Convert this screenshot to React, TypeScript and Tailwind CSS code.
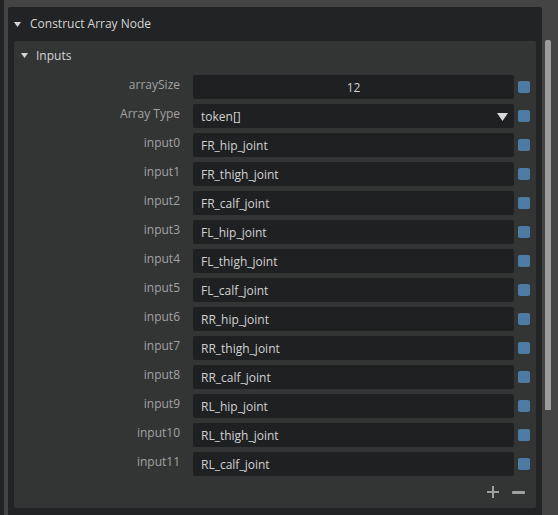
import React from 'react';

const inputs = [
  'FR_hip_joint',
  'FR_thigh_joint',
  'FR_calf_joint',
  'FL_hip_joint',
  'FL_thigh_joint',
  'FL_calf_joint',
  'RR_hip_joint',
  'RR_thigh_joint',
  'RR_calf_joint',
  'RL_hip_joint',
  'RL_thigh_joint',
  'RL_calf_joint',
];

const Caret = ({ className }: { className?: string }) => (
  <svg width="7" height="5" viewBox="0 0 7 5" className={className}>
    <path d="M0 0 H7 L3.5 5 Z" fill="currentColor" />
  </svg>
);

const Row = ({ label, children }: { label: string; children: React.ReactNode }) => (
  <div className="flex items-start h-[24px]">
    <div className="w-[166px] shrink-0 pt-[1px] text-right text-[12px] leading-[18px] text-[#a2a2a2]">{label}</div>
    <div className="ml-[13px] w-[321px] h-[24px] pt-[1px] rounded-[2px] bg-[#1f2022] flex items-center text-[12px] text-[#d2d2d2]">
      {children}
    </div>
    <div className="ml-[4px] h-[24px] flex items-center">
      <div className="w-[12px] h-[12px] rounded-[2px] bg-[#4d7ba3]" />
    </div>
  </div>
);

export default function App() {
  return (
    <div
      className="flex w-[558px] h-[515px] overflow-hidden bg-[#444444]"
      style={{ fontFamily: '"Open Sans", "Noto Sans", sans-serif' }}
    >
      <div className="w-[4px] h-full bg-[#222324]" />
      <div className="ml-[4px] mt-[7px] w-[534px] flex flex-col bg-[#222324] rounded-tl-[2px] rounded-tr-[2px]">
        <div className="h-[34px] flex items-center pl-[6px] text-[#d5d5d5] text-[12px]">
          <Caret className="text-[#d5d5d5]" />
          <span className="ml-[9px]">Construct Array Node</span>
        </div>
        <div className="mx-[6px] h-[467px] bg-[#333434] rounded-[2px] flex flex-col">
          <div className="h-[29px] flex items-center pl-[7px] text-[#d5d5d5] text-[12px]">
            <Caret className="text-[#d5d5d5]" />
            <span className="ml-[8px]">Inputs</span>
          </div>
          <div className="mt-[5px] flex flex-col gap-[5px]">
            <Row label="arraySize">
              <span className="w-full text-center">12</span>
            </Row>
            <Row label="Array Type">
              <span className="pl-[8px] flex-1">token[]</span>
              <svg width="11" height="8" viewBox="0 0 11 8" className="mr-[6px]">
                <path d="M0 0 H11 L5.5 8 Z" fill="#d8d8d8" />
              </svg>
            </Row>
            {inputs.map((v, i) => (
              <Row key={v} label={`input${i}`}>
                <span className="pl-[8px]">{v}</span>
              </Row>
            ))}
          </div>
          <div className="mt-[10px] flex justify-end items-center gap-[13px] pr-[11px] h-[12px]">
            <svg width="12" height="12" viewBox="0 0 12 12">
              <path d="M5 0 H7 V5 H12 V7 H7 V12 H5 V7 H0 V5 H5 Z" fill="#a0a0a0" />
            </svg>
            <svg width="13" height="3" viewBox="0 0 13 3">
              <rect width="13" height="3" rx="1" fill="#a0a0a0" />
            </svg>
          </div>
        </div>
      </div>
      <div className="ml-[3px] mt-[40px] w-[6px] h-[370px] bg-[#9c9c9c] rounded-t-[2px]" />
    </div>
  );
}
